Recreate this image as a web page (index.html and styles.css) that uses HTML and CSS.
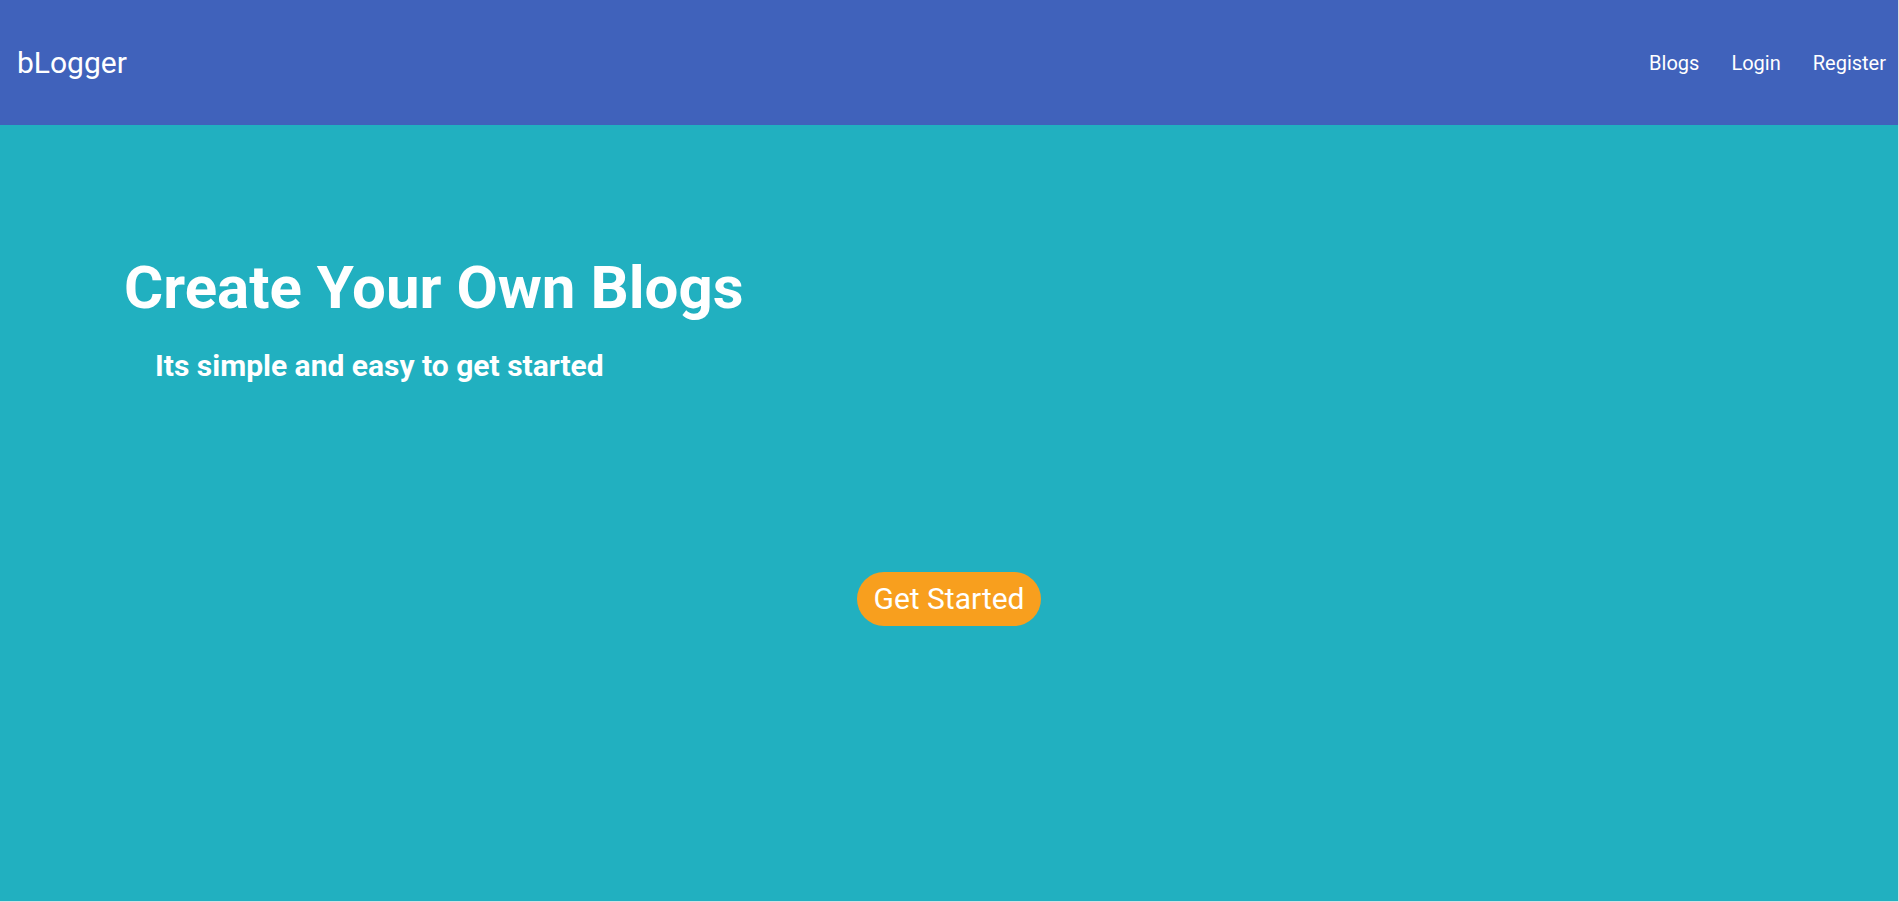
FILE: index.html
```html
<!DOCTYPE html>
<html lang="en">
<head>
<meta charset="utf-8">
<title>bLogger</title>
<link rel="stylesheet" href="styles.css">
</head>
<body>
<div class="app">
  <header class="navbar">
    <a class="brand" href="#">bLogger</a>
    <nav class="nav">
      <a href="#">Blogs</a>
      <a href="#">Login</a>
      <a href="#">Register</a>
    </nav>
  </header>
  <main class="hero">
    <h1 class="hero-title">Create Your Own Blogs</h1>
    <p class="hero-sub">Its simple and easy to get started</p>
    <div class="hero-cta">
      <a class="btn" href="#">Get Started</a>
    </div>
  </main>
</div>
</body>
</html>
```
FILE: styles.css
```css
html, body {
  margin: 0;
  padding: 0;
  background: #d9dde0;
  font-family: Roboto, "Liberation Sans", Arial, sans-serif;
}
.app {
  width: calc(100% - 1px);
  height: 901px;
  display: flex;
  flex-direction: column;
}
.navbar {
  height: 125px;
  flex: 0 0 125px;
  background: #4062bb;
  display: flex;
  align-items: center;
  justify-content: space-between;
  padding: 0 12px 0 17px;
}
.brand {
  color: #fff;
  text-decoration: none;
  font-size: 30px;
  font-weight: 400;
}
.nav {
  display: flex;
  gap: 32px;
}
.nav a {
  color: #fff;
  text-decoration: none;
  font-size: 20px;
}
.hero {
  flex: 1;
  background: #21b0c0;
  padding: 127px 0 0 0;
}
.hero-title {
  margin: 0 0 0 124px;
  color: #fff;
  font-size: 60px;
  font-weight: 700;
  line-height: normal;
}
.hero-sub {
  margin: 25px 0 0 155px;
  color: #fff;
  font-size: 30px;
  font-weight: 700;
  line-height: normal;
}
.hero-cta {
  display: flex;
  justify-content: center;
  margin-top: 189px;
}
.btn {
  display: inline-block;
  background: #f89f1e;
  color: #fff;
  text-decoration: none;
  font-size: 30px;
  line-height: 36px;
  padding: 9px 16px;
  border-radius: 27px;
}
```
